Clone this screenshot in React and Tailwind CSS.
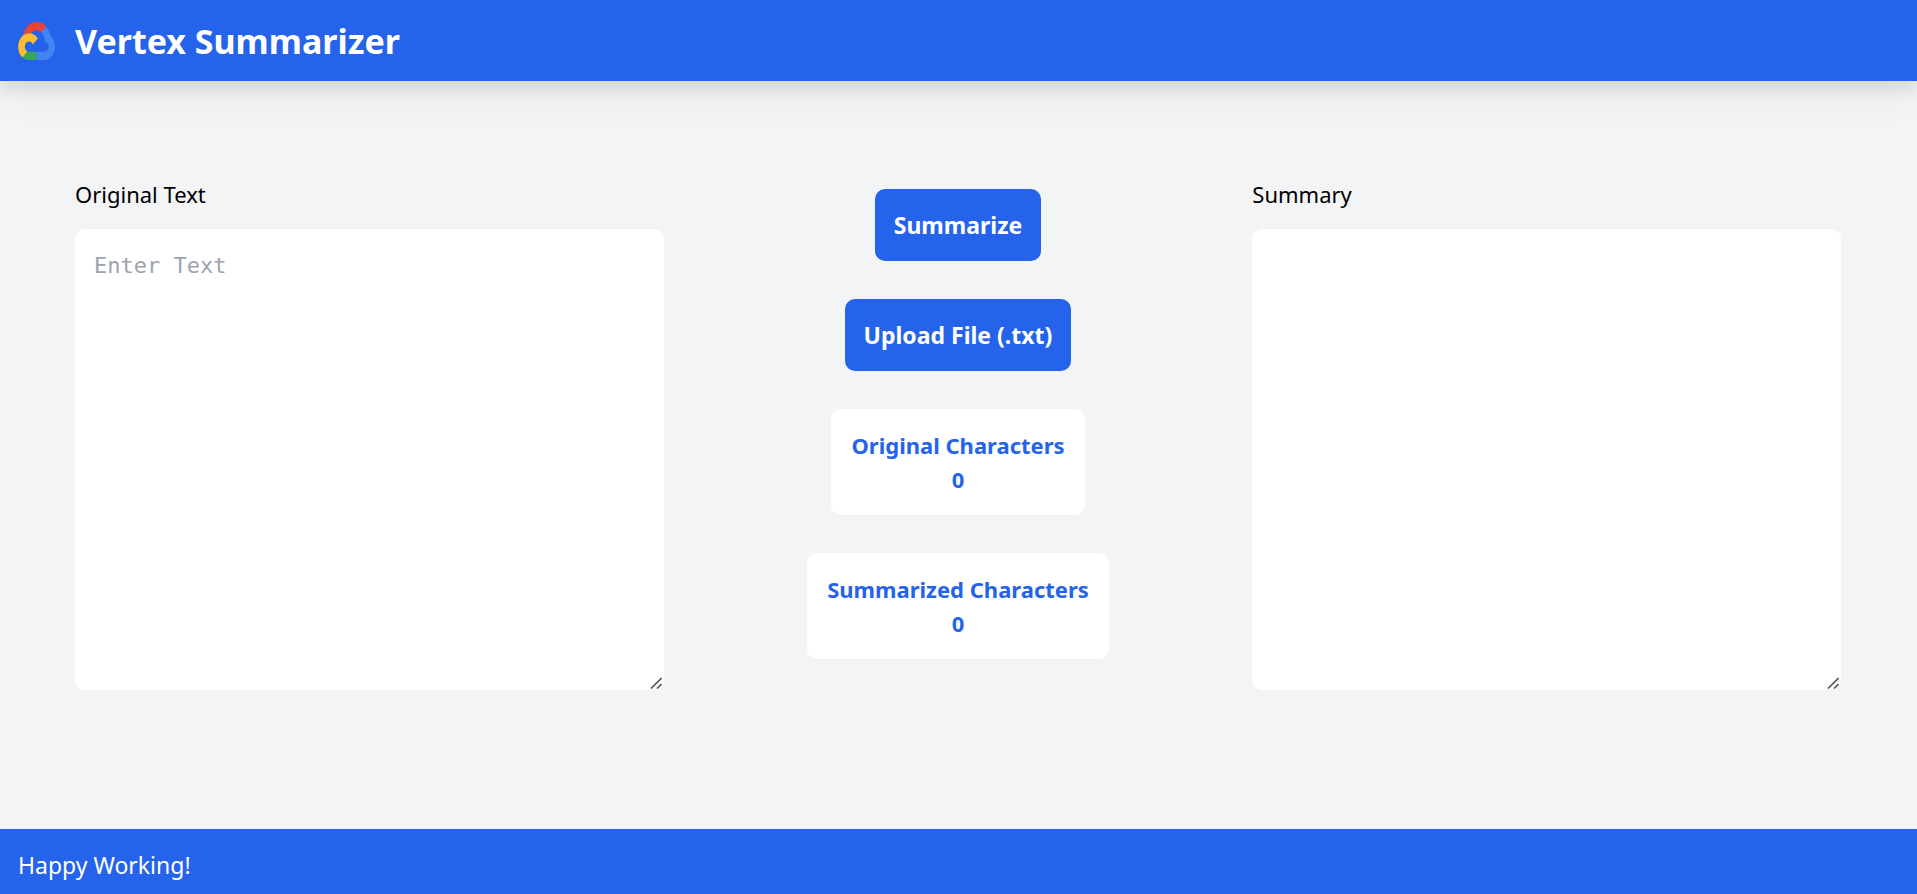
import { useRef, useState } from "react";

function CloudLogo() {
  return (
    <svg
      className="h-[38px] w-[37px] shrink-0"
      viewBox="5 14.5 117.6 93.4"
      preserveAspectRatio="none"
      role="img"
      aria-label="Cloud logo"
    >
      <path fill="#ea4335" d="M80.6 40.3h.4l-.2-.2 14-14v-.3c-11.8-10.4-28.1-14-43.2-9.5C36.5 20.8 24.9 32.8 20.7 48c.2-.1.5-.2.8-.2 5.2-3.4 11.4-5.4 17.9-5.4 2.2 0 4.3.2 6.4.6.1-.1.2-.1.3-.1 9-9.9 24.2-11.1 34.6-2.6h-.1z" />
      <path fill="#4285f4" d="M108.1 47.8c-2.3-8.5-7.1-16.2-13.8-22.1L80 39.9c6 4.9 9.5 12.3 9.3 20v2.5c16.9 0 16.9 25.2 0 25.2H63.9v20h-.1l.1.2h25.4c14.6.1 27.5-9.3 31.8-23.1 4.3-13.8-1-28.8-13-36.9z" />
      <path fill="#34a853" d="M39 107.9h24.9V87.7H39c-1.9 0-3.7-.4-5.4-1.1l-15.2 14.6v.2c6 4.3 13.2 6.6 20.7 6.6z" />
      <path fill="#fbbc34" d="M40.2 41.9c-14.9.1-28.1 9.3-32.9 22.8-4.8 13.6 0 28.5 11.8 37.3l15.6-14.9c-8.6-3.7-10.6-14.5-4-20.8 6.6-6.4 17.8-4.4 21.7 3.8L68 55.2C61.4 46.9 51.1 42 40.2 42.1z" />
    </svg>
  );
}

const buttonClass =
  "cursor-pointer rounded-[10px] bg-[#2563eb] p-[19px] text-[23px] leading-[34px] font-bold text-white hover:bg-[#1d4ed8]";

function TextPanel({ id, label, ...props }) {
  return (
    <div className="flex flex-col gap-[18px]">
      <label htmlFor={id}>{label}</label>
      <div className="relative">
        <textarea
          id={id}
          className="block h-[461px] w-full resize-y rounded-[10px] bg-white px-[19px] py-[20px] font-['DejaVu_Sans_Mono',monospace] text-[22px] leading-[34px] placeholder:text-[#9ca3af] [&::-webkit-resizer]:bg-transparent"
          {...props}
        />
        <svg
          className="pointer-events-none absolute right-[2px] bottom-[1px] size-[12px]"
          viewBox="0 0 12 12"
          fill="none"
          stroke="#555"
          strokeWidth="1.6"
          aria-hidden="true"
        >
          <path d="M1 11.5 11.5 1M7 11.5l4.5-4.5" />
        </svg>
      </div>
    </div>
  );
}

function CountCard({ label, count }) {
  return (
    <div className="rounded-[10px] bg-white px-[20px] py-[19px] text-center font-bold text-[#2563eb]">
      <p>{label}</p>
      <p>{count}</p>
    </div>
  );
}

export default function App() {
  const [text, setText] = useState("");
  const [summary, setSummary] = useState("");
  const fileInput = useRef(null);

  const summarize = () => setSummary(text.split(/(?<=[.!?])\s+/)[0] ?? "");
  const loadFile = async (event) => {
    const file = event.target.files[0];
    if (file) setText(await file.text());
  };

  return (
    <div className="flex min-h-screen flex-col bg-[#f3f4f6] font-['Noto_Sans',sans-serif] text-[22px] leading-[34px] text-black">
      <header className="flex h-[81px] items-center gap-5 bg-[#2563eb] px-[18px] shadow-[0_24px_32px_rgb(0_0_0/0.03),0_10px_12px_rgb(0_0_0/0.08)]">
        <CloudLogo />
        <h1 className="text-[34px] leading-[44px] font-bold text-white">Vertex Summarizer</h1>
      </header>

      <main className="grid flex-1 grid-cols-3 items-start pt-24 pr-[76px] pb-10 pl-[75px]">
        <TextPanel
          id="original"
          label="Original Text"
          placeholder="Enter Text"
          value={text}
          onChange={(event) => setText(event.target.value)}
        />
        <div className="flex flex-col items-center gap-[38px] pt-3">
          <button type="button" className={buttonClass} onClick={summarize}>
            Summarize
          </button>
          <button type="button" className={buttonClass} onClick={() => fileInput.current.click()}>
            Upload File (.txt)
          </button>
          <input
            ref={fileInput}
            type="file"
            accept=".txt"
            aria-label="Text file"
            className="hidden"
            onChange={loadFile}
          />
          <CountCard label="Original Characters" count={text.length} />
          <CountCard label="Summarized Characters" count={summary.length} />
        </div>
        <TextPanel id="summary" label="Summary" value={summary} readOnly />
      </main>

      <footer className="flex h-[65px] items-center bg-[#2563eb] px-[18px] pt-[6px] text-[23px] text-white">
        <p>Happy Working!</p>
      </footer>
    </div>
  );
}
